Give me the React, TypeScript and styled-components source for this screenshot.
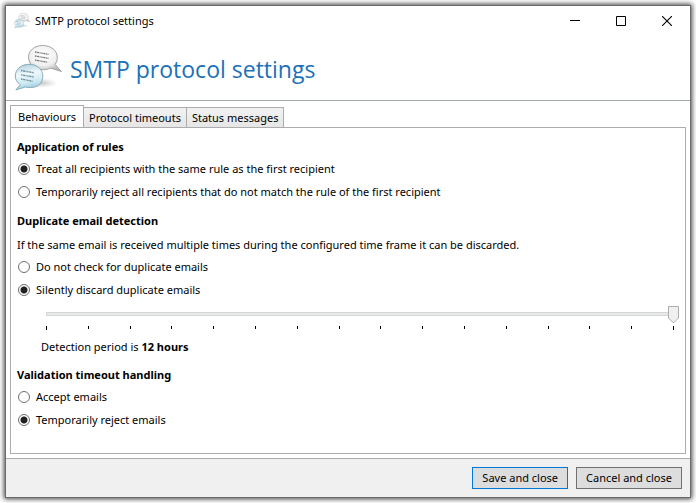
import React, { useState } from "react";
import styled, { createGlobalStyle, css } from "styled-components";

const GlobalStyle = createGlobalStyle`
  * { box-sizing: border-box; }
  body {
    margin: 0;
    background: #fff;
    color: #000;
    font-family: "Noto Sans", "Open Sans", sans-serif;
    font-size: 11px;
    line-height: 16px;
  }
  button, input { font: inherit; color: inherit; margin: 0; }
`;

const Desktop = styled.div`
  display: flex;
  min-height: 100vh;
  padding: 5px;
`;

const Window = styled.main`
  display: flex;
  flex: 1;
  flex-direction: column;
  min-width: 0;
  border: 1px solid #6a6a6a;
  background: #fff;
  box-shadow: 0 0 5px 1px rgba(0, 0, 0, 0.75);
`;

const TitleBar = styled.header`
  display: flex;
  align-items: center;
  height: 30px;
  padding-left: 8px;
`;

const WindowTitle = styled.span`
  flex: 1;
  padding-left: 5px;
`;

const WindowButton = styled.button`
  display: flex;
  align-items: center;
  justify-content: center;
  width: 46px;
  height: 28px;
  padding: 0;
  border: 0;
  background: none;
`;

const Banner = styled.div`
  display: flex;
  align-items: center;
  gap: 8px;
  height: 65px;
  padding: 2px 8px 0;
  border-bottom: 1px solid #a5acaf;
`;

const BannerTitle = styled.h1`
  margin: 0;
  color: #1b71b8;
  font-family: "Open Sans", "Noto Sans", sans-serif;
  font-size: 23px;
  font-weight: 400;
  line-height: 32px;
`;

const Content = styled.div`
  display: flex;
  flex: 1;
  flex-direction: column;
  padding: 4px;
`;

const TabList = styled.div`
  display: flex;
  align-items: flex-end;
  margin-bottom: -1px;
`;

const Tab = styled.button<{ $active: boolean }>`
  height: 21px;
  padding: 0 5px;
  border: 1px solid #acacac;
  background: linear-gradient(#f2f2f2, #e6e6e6);
  white-space: nowrap;

  & + & { margin-left: -1px; }

  ${({ $active }) =>
    $active &&
    css`
      height: 23px;
      padding: 0 7px;
      border-bottom-color: #fff;
      background: #fff;
    `}
`;

const Panel = styled.section`
  flex: 1;
  padding: 11px 6px;
  border: 1px solid #acacac;
`;

const Group = styled.fieldset`
  min-width: 0;
  margin: 0;
  padding: 0;
  border: 0;

  & + & { margin-top: 10px; }
`;

const GroupTitle = styled.legend`
  padding: 0 0 2px;
  font-weight: 700;
`;

const Note = styled.p`
  margin: 6px 0 2px;
`;

const Option = styled.label`
  display: flex;
  align-items: center;
  gap: 6px;
  height: 23px;
`;

const Radio = styled.input`
  appearance: none;
  width: 12px;
  height: 12px;
  margin-left: 1px;
  border: 1px solid #707070;
  border-radius: 50%;
  background: #fff;

  &:checked {
    background: radial-gradient(circle, #212121 3px, #fff 4px);
  }
`;

const SliderBlock = styled.div`
  margin: 5px 0 2px 24px;
`;

const Slider = styled.input`
  appearance: none;
  display: block;
  width: 100%;
  height: 18px;
  background:
    linear-gradient(#e7eaea, #e7eaea) center 7px / calc(100% - 12px) 2px no-repeat,
    linear-gradient(#d6d6d6, #d6d6d6) center 6px / calc(100% - 10px) 4px no-repeat;

  &::-webkit-slider-thumb {
    appearance: none;
    width: 11px;
    height: 18px;
    border: 0;
    background: url("data:image/svg+xml,%3Csvg xmlns='http://www.w3.org/2000/svg' width='11' height='18'%3E%3Cpath d='M.5.5h10v11.5l-5 5-5-5z' fill='%23f0f0f0' stroke='%23acacac'/%3E%3C/svg%3E");
  }
`;

const Ticks = styled.div`
  display: flex;
  justify-content: space-between;
  height: 4px;
  margin: 2px 5px 9px;
`;

const Tick = styled.span`
  width: 1px;
  height: 3px;
  background: #000;

  &:first-child, &:last-child { height: 4px; }
`;

const Footer = styled.footer`
  display: flex;
  align-items: center;
  justify-content: flex-end;
  gap: 8px;
  height: 39px;
  padding: 0 8px 1px;
  border-top: 1px solid #acacac;
  background: #f0f0f0;
`;

const ActionButton = styled.button<{ $primary?: boolean }>`
  height: 22px;
  padding: 0 9px;
  border: 1px solid ${({ $primary }) => ($primary ? "#0078d7" : "#707070")};
  background: #ddd;
  white-space: nowrap;
`;

const BubblesIcon = ({ size }: { size: number }) => (
  <svg width={size} height={size} viewBox="0 1 48 48" aria-hidden="true">
    <defs>
      <radialGradient id={`grey${size}`} cx=".45" cy=".35" r=".65">
        <stop offset="0" stopColor="#fff" />
        <stop offset=".65" stopColor="#efefef" />
        <stop offset="1" stopColor="#bdbdbd" />
      </radialGradient>
      <linearGradient id={`blue${size}`} x1=".4" y1="0" x2=".6" y2="1">
        <stop offset="0" stopColor="#b5d3df" />
        <stop offset=".35" stopColor="#eef8fb" />
        <stop offset=".7" stopColor="#cdeaf4" />
        <stop offset="1" stopColor="#8dc0d2" />
      </linearGradient>
      <radialGradient id={`shade${size}`}>
        <stop offset="0" stopColor="#777" stopOpacity=".45" />
        <stop offset="1" stopColor="#999" stopOpacity="0" />
      </radialGradient>
    </defs>
    <ellipse cx="26" cy="39" rx="18" ry="5" fill={`url(#shade${size})`} />
    <path
      d="M28.500 1.500C37 1.500 43.300 6.500 43.300 13.500c0 2.800-.8 5-2.300 7L47.500 27.500l-11-3.500c-2.300 1.300-5 1.900-8 1.700C20 25.200 14.500 20 14.500 13.200 14.500 6.500 20.500 1.500 28.500 1.500z"
      fill={`url(#grey${size})`}
      stroke="#999"
      strokeWidth=".9"
    />
    <g stroke="#777" strokeWidth="1.300" strokeDasharray="1.500 .6 2.200 .5 .9 .6" fill="none">
      <path d="M21 8l13.500 2.300M21 12l13.500 2.300M21 16l12.500 2.300" />
    </g>
    <path
      d="M15 20.300c8 0 13.800 5 13.800 12S24 43.400 16.500 43.600c-2 0-3.700-.2-5.200-.6L1.800 46l4.500-5.300C3 38.500 1.300 35.500 1.300 32c0-6.800 6-11.700 13.700-11.700z"
      fill={`url(#blue${size})`}
      stroke="#7fa5b3"
      strokeWidth=".9"
    />
    <g stroke="#6b8c97" strokeWidth="1.300" strokeDasharray="1.500 .6 2.200 .5 .9 .6" fill="none">
      <path d="M7 26.500l13 2.300M7 30.800l13 2.300M7 35l11.500 2.300" />
    </g>
  </svg>
);

const TABS = ["Behaviours", "Protocol timeouts", "Status messages"];
const PERIODS = [
  "1 minute", "5 minutes", "10 minutes", "15 minutes", "30 minutes", "1 hour",
  "2 hours", "3 hours", "4 hours", "5 hours", "6 hours", "7 hours",
  "8 hours", "9 hours", "10 hours", "12 hours",
];

interface RadioOptionsProps {
  name: string;
  options: string[];
  initial: number;
}

const RadioOptions = ({ name, options, initial }: RadioOptionsProps) => (
  <>
    {options.map((text, i) => (
      <Option key={text}>
        <Radio type="radio" name={name} defaultChecked={i === initial} />
        {text}
      </Option>
    ))}
  </>
);

export default function App() {
  const [tab, setTab] = useState(0);
  const [period, setPeriod] = useState(PERIODS.length - 1);

  return (
    <>
      <GlobalStyle />
      <Desktop>
        <Window>
          <TitleBar>
            <BubblesIcon size={16} />
            <WindowTitle>SMTP protocol settings</WindowTitle>
            <WindowButton aria-label="Minimise">
              <svg width="10" height="10"><path d="M0 4.500h10" stroke="#000" /></svg>
            </WindowButton>
            <WindowButton aria-label="Maximise">
              <svg width="10" height="10"><path d="M.5.5h9v9h-9z" fill="none" stroke="#000" /></svg>
            </WindowButton>
            <WindowButton aria-label="Close">
              <svg width="10" height="10"><path d="M0 0l10 10M10 0L0 10" stroke="#000" strokeWidth="1.100" /></svg>
            </WindowButton>
          </TitleBar>
          <Banner>
            <BubblesIcon size={48} />
            <BannerTitle>SMTP protocol settings</BannerTitle>
          </Banner>
          <Content>
            <TabList role="tablist">
              {TABS.map((name, i) => (
                <Tab key={name} role="tab" aria-selected={tab === i} $active={tab === i} onClick={() => setTab(i)}>
                  {name}
                </Tab>
              ))}
            </TabList>
            <Panel role="tabpanel" aria-label={TABS[tab]}>
              <Group>
                <GroupTitle>Application of rules</GroupTitle>
                <RadioOptions
                  name="rules"
                  initial={0}
                  options={[
                    "Treat all recipients with the same rule as the first recipient",
                    "Temporarily reject all recipients that do not match the rule of the first recipient",
                  ]}
                />
              </Group>
              <Group>
                <GroupTitle>Duplicate email detection</GroupTitle>
                <Note>
                  If the same email is received multiple times during the configured time frame it can be discarded.
                </Note>
                <RadioOptions
                  name="duplicates"
                  initial={1}
                  options={["Do not check for duplicate emails", "Silently discard duplicate emails"]}
                />
                <SliderBlock>
                  <Slider
                    id="period"
                    type="range"
                    min={0}
                    max={PERIODS.length - 1}
                    value={period}
                    onChange={(e) => setPeriod(Number(e.target.value))}
                  />
                  <Ticks aria-hidden="true">
                    {PERIODS.map((p) => <Tick key={p} />)}
                  </Ticks>
                  <label htmlFor="period">
                    Detection period is <b>{PERIODS[period]}</b>
                  </label>
                </SliderBlock>
              </Group>
              <Group>
                <GroupTitle>Validation timeout handling</GroupTitle>
                <RadioOptions
                  name="validation"
                  initial={1}
                  options={["Accept emails", "Temporarily reject emails"]}
                />
              </Group>
            </Panel>
          </Content>
          <Footer>
            <ActionButton $primary>Save and close</ActionButton>
            <ActionButton>Cancel and close</ActionButton>
          </Footer>
        </Window>
      </Desktop>
    </>
  );
}
